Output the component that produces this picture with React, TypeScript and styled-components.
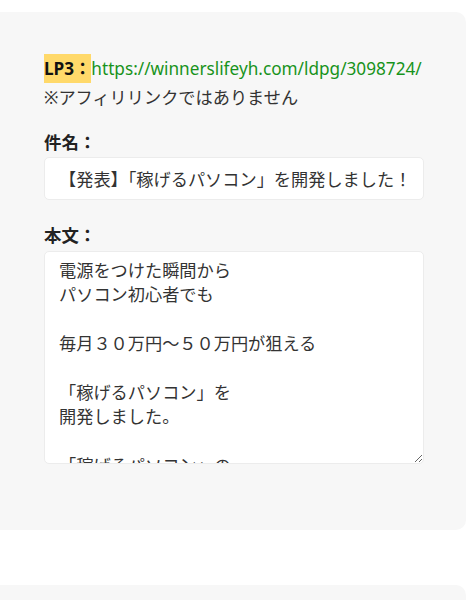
import React from "react";
import styled, { createGlobalStyle } from "styled-components";

const GlobalStyle = createGlobalStyle`
  html, body {
    margin: 0;
    padding: 0;
    background: #ffffff;
  }
  body {
    font-family: "Noto Sans", "Noto Sans CJK JP", sans-serif;
    color: #333333;
  }
`;

const bodyText = `電源をつけた瞬間から
パソコン初心者でも

毎月３０万円～５０万円が狙える

「稼げるパソコン」を
開発しました。

「稼げるパソコン」の`;

const App = () => {
  return (
    <>
      <GlobalStyle />
      <Page lang="ja">
        <Card>
          <Intro>
            <Marker>LP3：</Marker>
            <Link>https://winnerslifeyh.com/ldpg/3098724/</Link>
            <br />
            ※アフィリリンクではありません
          </Intro>

          <Field>
            <Label>件名：</Label>
            <TextInput readOnly value="【発表】「稼げるパソコン」を開発しました！" />
          </Field>

          <Field>
            <Label>本文：</Label>
            <TextArea readOnly value={bodyText} />
          </Field>
        </Card>
        <NextCard />
      </Page>
    </>
  );
};

const Page = styled.div`
  padding-top: 12px;
  display: flex;
  flex-direction: column;
  gap: 55px;
`;

const Card = styled.section`
  width: 466px;
  box-sizing: border-box;
  background: #f7f7f7;
  border-radius: 0 10px 10px 0;
  padding: 42px 42px 66px 44px;
  display: flex;
  flex-direction: column;
  gap: 16px;
`;

const NextCard = styled.div`
  width: 466px;
  height: 40px;
  background: #f7f7f7;
  border-radius: 0 10px 0 0;
`;

const Intro = styled.p`
  margin: 0;
  font-size: 17.2px;
  line-height: 29px;
  color: #333333;
  white-space: nowrap;
`;

const Marker = styled.span`
  font-weight: 700;
  color: #111111;
  background: #ffd96a;
  padding: 3px 0;
`;

const Link = styled.span`
  color: #17931b;
`;

const Field = styled.div`
  display: flex;
  flex-direction: column;
  & + & {
    margin-top: 5px;
  }
`;

const Label = styled.div`
  font-size: 17.4px;
  font-weight: 700;
  line-height: 29px;
  color: #222222;
`;

const TextInput = styled.input`
  box-sizing: border-box;
  width: 380px;
  height: 43px;
  padding: 0 14px;
  border: 1px solid #ececec;
  border-radius: 5px;
  background: #ffffff;
  font-family: "Noto Sans CJK JP", "Noto Sans", sans-serif;
  font-size: 17.2px;
  color: #333333;
  outline: none;
`;

const TextArea = styled.textarea`
  box-sizing: border-box;
  width: 380px;
  height: 213px;
  margin-top: 1px;
  padding: 6px 14px;
  border: 1px solid #ececec;
  border-radius: 5px;
  background: #ffffff;
  font-family: "Noto Sans CJK JP", "Noto Sans", sans-serif;
  font-size: 17.2px;
  line-height: 24.4px;
  color: #333333;
  overflow: hidden;
  outline: none;
  resize: vertical;
`;

export default App;
